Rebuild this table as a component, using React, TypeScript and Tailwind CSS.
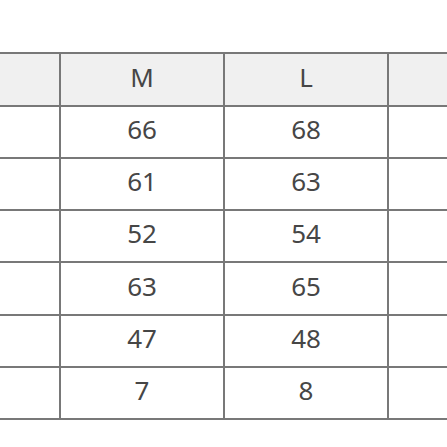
const rows: [string, string][] = [
  ['66', '68'],
  ['61', '63'],
  ['52', '54'],
  ['63', '65'],
  ['47', '48'],
  ['7', '8'],
];

const cell = 'flex items-center justify-center pb-[5px] border-r-2 border-b-2 border-[#787878]';

export default function App() {
  return (
    <div
      className="w-[447px] h-[447px] overflow-hidden bg-white pt-[52px] text-[26px] text-[#464646]"
      style={{ fontFamily: '"Noto Sans", "Open Sans", sans-serif' }}
    >
      <div className="grid grid-cols-[61px_164px_164px_1fr] border-t-2 border-[#787878]">
        <div className={`${cell} h-[53px] bg-[#f0f0f0]`} />
        <div className={`${cell} h-[53px] bg-[#f0f0f0]`}>M</div>
        <div className={`${cell} h-[53px] bg-[#f0f0f0]`}>L</div>
        <div className="h-[53px] bg-[#f0f0f0] border-b-2 border-[#787878]" />
        {rows.map(([m, l], i) => {
          const h = i === 3 ? 'h-[53px]' : 'h-[52px]';
          return (
            <div key={i} className="contents">
              <div className={`${cell} ${h}`} />
              <div className={`${cell} ${h}`}>{m}</div>
              <div className={`${cell} ${h}`}>{l}</div>
              <div className={`${h} border-b-2 border-[#787878]`} />
            </div>
          );
        })}
      </div>
    </div>
  );
}
